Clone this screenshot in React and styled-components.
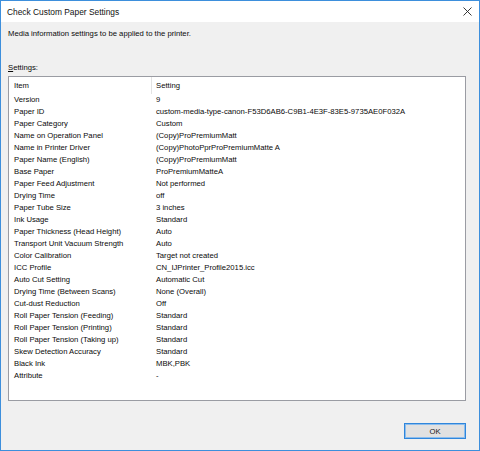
import React from 'react';
import styled, { createGlobalStyle } from 'styled-components';

const rows = [
  ['Version', '9'],
  ['Paper ID', 'custom-media-type-canon-F53D6AB6-C9B1-4E3F-83E5-9735AE0F032A'],
  ['Paper Category', 'Custom'],
  ['Name on Operation Panel', '(Copy)ProPremiumMatt'],
  ['Name in Printer Driver', '(Copy)PhotoPprProPremiumMatte A'],
  ['Paper Name (English)', '(Copy)ProPremiumMatt'],
  ['Base Paper', 'ProPremiumMatteA'],
  ['Paper Feed Adjustment', 'Not performed'],
  ['Drying Time', 'off'],
  ['Paper Tube Size', '3 inches'],
  ['Ink Usage', 'Standard'],
  ['Paper Thickness (Head Height)', 'Auto'],
  ['Transport Unit Vacuum Strength', 'Auto'],
  ['Color Calibration', 'Target not created'],
  ['ICC Profile', 'CN_IJPrinter_Profile2015.icc'],
  ['Auto Cut Setting', 'Automatic Cut'],
  ['Drying Time (Between Scans)', 'None (Overall)'],
  ['Cut-dust Reduction', 'Off'],
  ['Roll Paper Tension (Feeding)', 'Standard'],
  ['Roll Paper Tension (Printing)', 'Standard'],
  ['Roll Paper Tension (Taking up)', 'Standard'],
  ['Skew Detection Accuracy', 'Standard'],
  ['Black Ink', 'MBK,PBK'],
  ['Attribute', '-'],
];

const GlobalStyle = createGlobalStyle`
  html, body {
    margin: 0;
    padding: 0;
    background: #ffffff;
  }
  * {
    box-sizing: border-box;
  }
`;

const Window = styled.div`
  width: 480px;
  height: 451px;
  border: 1px solid #3d8fdc;
  display: flex;
  flex-direction: column;
  font-family: "Liberation Sans", Arial, sans-serif;
  color: #0a0a0a;
  background: #f0f0f0;
`;

const TitleBar = styled.div`
  height: 21px;
  background: #ffffff;
  display: flex;
  align-items: center;
  justify-content: space-between;
  padding: 0 7px 0 6px;
  flex-shrink: 0;
`;

const Title = styled.div`
  font-size: 8.4px;
  color: #111;
`;

const CloseButton = styled.div`
  width: 10px;
  height: 10px;
  display: flex;
  align-items: center;
  justify-content: center;
`;

const Body = styled.div`
  flex: 1;
  display: flex;
  flex-direction: column;
  padding: 6px 13px 0 7px;
  font-size: 7.7px;
`;

const Intro = styled.div`
  line-height: 12px;
`;

const Label = styled.div`
  line-height: 12px;
  margin-top: 22px;

  & u {
    text-decoration-thickness: 1px;
  }
`;

const ListBox = styled.div`
  margin-top: 2px;
  height: 325px;
  background: #ffffff;
  border: 1px solid #9a9ca3;
  display: flex;
  flex-direction: column;
`;

const Row = styled.div`
  display: grid;
  grid-template-columns: 142px 1fr;
  height: ${(p) => (p.$header ? '17px' : '12px')};
  line-height: ${(p) => (p.$header ? '17px' : '12px')};
  white-space: nowrap;
`;

const Cell = styled.div`
  padding-left: ${(p) => (p.$divider ? '4px' : '5px')};
  border-left: ${(p) => (p.$divider ? '1px solid #e3e3e3' : 'none')};
  overflow: hidden;
`;

const Footer = styled.div`
  display: flex;
  justify-content: flex-end;
  padding-top: 22px;
`;

const OkButton = styled.button`
  width: 62px;
  height: 16px;
  padding: 0;
  background: #e1e1e1;
  border: 1px solid #2f86dc;
  box-shadow: inset 0 0 0 1px #8dbdec;
  font-family: "Liberation Sans", Arial, sans-serif;
  font-size: 7.7px;
  color: #1a1a1a;
`;

export default function App() {
  return (
    <>
      <GlobalStyle />
      <Window>
        <TitleBar>
          <Title>Check Custom Paper Settings</Title>
          <CloseButton>
            <svg width="9" height="9" viewBox="0 0 9 9">
              <path d="M0.5 0.5 L8.5 8.5 M8.5 0.5 L0.5 8.5" stroke="#222" strokeWidth="0.9" fill="none" />
            </svg>
          </CloseButton>
        </TitleBar>
        <Body>
          <Intro>Media information settings to be applied to the printer.</Intro>
          <Label>
            <u>S</u>ettings:
          </Label>
          <ListBox>
            <Row $header>
              <Cell>Item</Cell>
              <Cell $divider>Setting</Cell>
            </Row>
            {rows.map(([item, value]) => (
              <Row key={item}>
                <Cell>{item}</Cell>
                <Cell>{value}</Cell>
              </Row>
            ))}
          </ListBox>
          <Footer>
            <OkButton>OK</OkButton>
          </Footer>
        </Body>
      </Window>
    </>
  );
}
